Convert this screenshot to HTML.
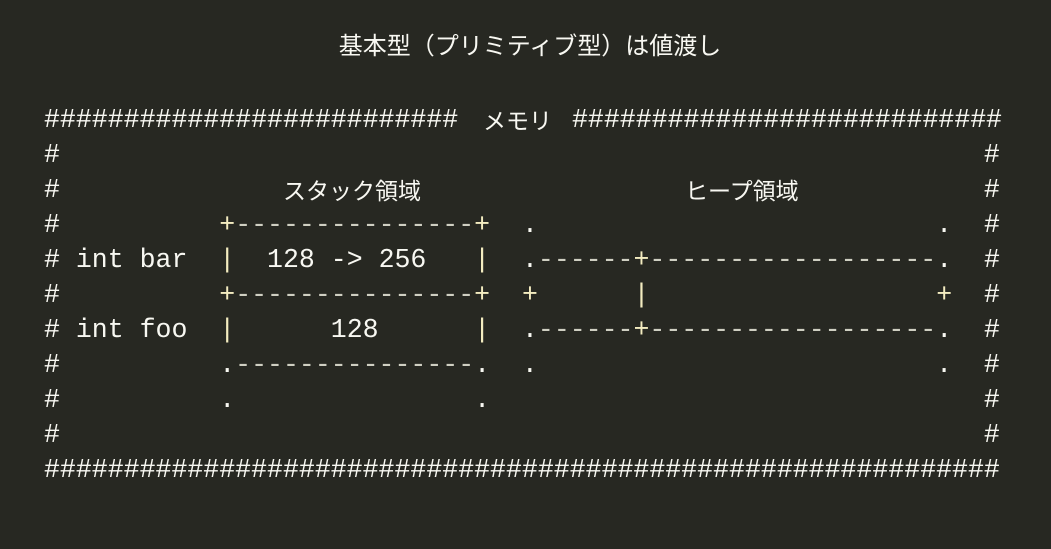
<!DOCTYPE html>
<html><head><meta charset="utf-8"><style>
html,body{margin:0;padding:0;background:#272822;width:1051px;height:549px;overflow:hidden}
.t{position:absolute;top:32px;left:0;width:1060px;text-align:center;color:#f8f8f2;font:24px/30px "Liberation Sans","Noto Sans CJK JP",sans-serif}
pre,.m{position:absolute;margin:0;font:26.55px/35px "Liberation Mono","Noto Sans CJK JP",monospace;color:#f8f8f2;white-space:pre}
pre{left:44px;top:103px}
.c{position:absolute;color:#f8f8f2;font:23px/35px "Noto Sans CJK JP",sans-serif;white-space:nowrap}
.y{color:#f3ecc0}
.d{color:#cfcfc2}
</style></head><body>
<div class="t">基本型（プリミティブ型）は値渡し</div>
<div class="m" style="left:44px;top:103px">##########################</div>
<div class="c" style="left:483px;top:102px">メモリ</div>
<div class="m" style="left:572px;top:103px">##########################</div>
<div class="m" style="left:986px;top:103px">#</div>
<div class="c" style="left:283px;top:172px">スタック領域</div>
<div class="c" style="left:685px;top:172px">ヒープ領域</div>
<pre>

#                                                          #
#                                                          #
#          <span class="y">+</span><span class="d">---------------</span><span class="y">+</span>  .                         .  #
# int bar  <span class="y">|</span>  128 -&gt; 256   <span class="y">|</span>  .<span class="d">------</span><span class="y">+</span><span class="d">------------------</span>.  #
#          <span class="y">+</span><span class="d">---------------</span><span class="y">+</span>  <span class="y">+</span>      <span class="y">|</span>                  <span class="y">+</span>  #
# int foo  <span class="y">|</span>      128      <span class="y">|</span>  .<span class="d">------</span><span class="y">+</span><span class="d">------------------</span>.  #
#          .<span class="d">---------------</span>.  .                         .  #
#          .               .                               #
#                                                          #
############################################################</pre>
</body></html>
